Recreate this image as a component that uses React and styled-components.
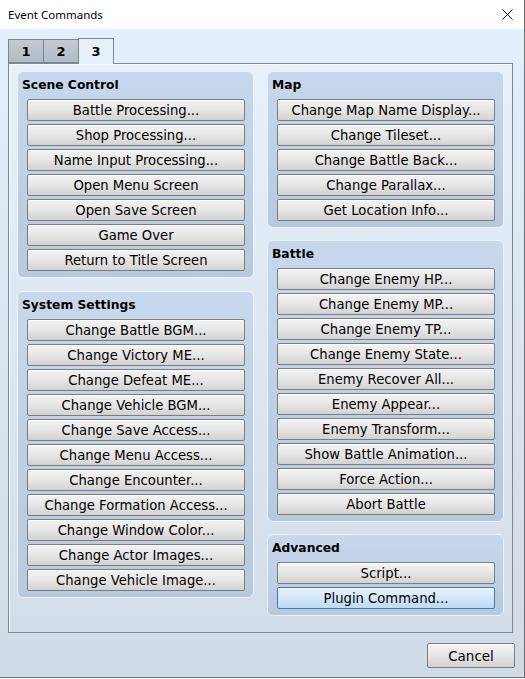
import React from "react";
import styled, { createGlobalStyle } from "styled-components";

const Global = createGlobalStyle`
  html, body { margin: 0; padding: 0; background: #fff; }
  body { font-family: "DejaVu Sans", Verdana, sans-serif; }
`;

const Window = styled.div`
  width: 524px;
  height: 677px;
  border-right: 1px solid #6d6d6d;
  border-bottom: 1px solid #6d6d6d;
  display: flex;
  flex-direction: column;
  background: #fff;
`;

const TitleBar = styled.div`
  height: 29px;
  flex: none;
  background: #fff;
  display: flex;
  align-items: center;
  justify-content: space-between;
  padding: 0 11px 0 8px;
  font-family: "Noto Sans", "Open Sans", sans-serif;
  font-size: 11.5px;
  color: #000;
`;

const Body = styled.div`
  flex: 1;
  background: linear-gradient(#e3effc, #d0dbe6);
  padding: 9px 11px 0 8px;
  display: flex;
  flex-direction: column;
`;

const Tabs = styled.div`
  display: flex;
  height: 25px;
  align-items: flex-end;
`;

const Tab = styled.div`
  width: 36px;
  height: ${(p) => (p.$active ? 26 : 24)}px;
  box-sizing: border-box;
  border: 1px solid #7d8791;
  border-bottom: ${(p) => (p.$active ? "none" : "1px solid #7d8791")};
  margin-left: ${(p) => (p.$first ? 0 : -1)}px;
  margin-bottom: ${(p) => (p.$active ? -1 : 0)}px;
  background: ${(p) =>
    p.$active ? "#e5f0fb" : "linear-gradient(#c2cbd4, #b1bbc5)"};
  display: flex;
  align-items: center;
  justify-content: center;
  font-weight: bold;
  font-size: 13px;
  color: #000;
  position: relative;
  z-index: ${(p) => (p.$active ? 2 : 1)};
`;

const Panel = styled.div`
  height: 570px;
  box-sizing: border-box;
  border: 1px solid #7d8791;
  background: linear-gradient(#e6f1fc, #d2dde9);
  box-shadow: inset 1px 1px 0 #f6faff;
  padding: 7px 7px 0 8px;
  display: grid;
  grid-template-columns: 237px 237px;
  column-gap: 13px;
  align-items: start;
`;

const Column = styled.div`
  display: flex;
  flex-direction: column;
  gap: ${(p) => p.$gap}px;
`;

const Group = styled.div`
  border-radius: 6px;
  border: 1px solid #eaf2fb;
  background: linear-gradient(#c7d8ec, #b7c9dd);
  padding: 0 8px 6px 9px;
  display: flex;
  flex-direction: column;
  gap: 3px;
`;

const GroupTitle = styled.div`
  height: 22px;
  padding-top: 2px;
  display: flex;
  align-items: center;
  margin-left: -5px;
  font-weight: bold;
  font-size: 12.3px;
  color: #000;
`;

const Button = styled.div`
  height: 22px;
  box-sizing: border-box;
  border: 1px solid ${(p) => (p.$hot ? "#3c7bb0" : "#7c7c7c")};
  border-radius: 2px;
  background: ${(p) =>
    p.$hot
      ? "linear-gradient(#e6f2fd, #d3e8fa 50%, #bcdaf3)"
      : "linear-gradient(#f3f3f3, #e6e6e6 50%, #d2d2d2)"};
  box-shadow: inset 0 1px 0 rgba(255, 255, 255, 0.8);
  display: flex;
  align-items: center;
  justify-content: center;
  font-size: 13.2px;
  color: #000;
  white-space: nowrap;
`;

const Footer = styled.div`
  display: flex;
  justify-content: flex-end;
  padding-top: 10px;
`;

const Cancel = styled(Button)`
  width: 88px;
  height: 25px;
  font-size: 13.5px;
  margin-right: -2px;
`;

const groupsLeft = [
  {
    title: "Scene Control",
    items: [
      "Battle Processing...",
      "Shop Processing...",
      "Name Input Processing...",
      "Open Menu Screen",
      "Open Save Screen",
      "Game Over",
      "Return to Title Screen",
    ],
  },
  {
    title: "System Settings",
    items: [
      "Change Battle BGM...",
      "Change Victory ME...",
      "Change Defeat ME...",
      "Change Vehicle BGM...",
      "Change Save Access...",
      "Change Menu Access...",
      "Change Encounter...",
      "Change Formation Access...",
      "Change Window Color...",
      "Change Actor Images...",
      "Change Vehicle Image...",
    ],
  },
];

const groupsRight = [
  {
    title: "Map",
    items: [
      "Change Map Name Display...",
      "Change Tileset...",
      "Change Battle Back...",
      "Change Parallax...",
      "Get Location Info...",
    ],
  },
  {
    title: "Battle",
    items: [
      "Change Enemy HP...",
      "Change Enemy MP...",
      "Change Enemy TP...",
      "Change Enemy State...",
      "Enemy Recover All...",
      "Enemy Appear...",
      "Enemy Transform...",
      "Show Battle Animation...",
      "Force Action...",
      "Abort Battle",
    ],
  },
  {
    title: "Advanced",
    items: ["Script...", "Plugin Command..."],
    hot: "Plugin Command...",
  },
];

function GroupBox({ g }) {
  return (
    <Group>
      <GroupTitle>{g.title}</GroupTitle>
      {g.items.map((t) => (
        <Button key={t} $hot={g.hot === t}>
          {t}
        </Button>
      ))}
    </Group>
  );
}

export default function App() {
  return (
    <>
      <Global />
      <Window>
        <TitleBar>
          <span>Event Commands</span>
          <svg width="11" height="11" viewBox="0 0 11 11">
            <path d="M0.5 0.5 L10.5 10.5 M10.5 0.5 L0.5 10.5" stroke="#111" strokeWidth="1" />
          </svg>
        </TitleBar>
        <Body>
          <Tabs>
            <Tab $first>1</Tab>
            <Tab>2</Tab>
            <Tab $active>3</Tab>
          </Tabs>
          <Panel>
            <Column $gap={13}>
              {groupsLeft.map((g) => (
                <GroupBox key={g.title} g={g} />
              ))}
            </Column>
            <Column $gap={12}>
              {groupsRight.map((g) => (
                <GroupBox key={g.title} g={g} />
              ))}
            </Column>
          </Panel>
          <Footer>
            <Cancel>Cancel</Cancel>
          </Footer>
        </Body>
      </Window>
    </>
  );
}
